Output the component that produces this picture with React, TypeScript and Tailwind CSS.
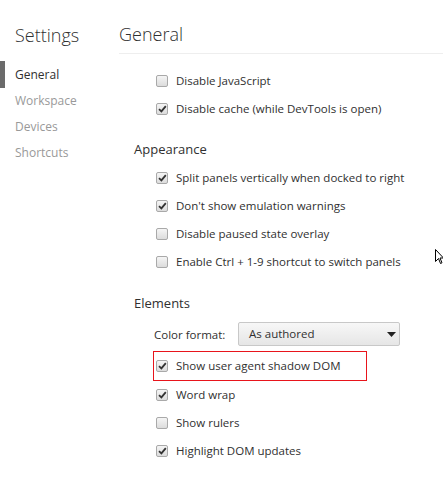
import React from "react";

const font = { fontFamily: '"Open Sans", "Noto Sans", sans-serif' };

function Box({ checked }: { checked: boolean }) {
  return (
    <span className="relative flex h-[12px] w-[12px] shrink-0 items-center justify-center rounded-[2px] border border-[#a9a9a9] bg-gradient-to-b from-[#f5f5f5] to-[#dcdcdc]">
      {checked && (
        <svg width="9" height="8" viewBox="0 0 9 8" className="absolute left-[1px] top-[1px]">
          <path d="M1 4.2 L3.4 6.4 L7.8 1.2" fill="none" stroke="#333" strokeWidth="1.8" />
        </svg>
      )}
    </span>
  );
}

function Row({ label, checked }: { label: string; checked: boolean }) {
  return (
    <div className="ml-[37px] flex h-[28px] items-center">
      <Box checked={checked} />
      <span className="ml-[8px] text-[11.5px] text-[#303030]">{label}</span>
    </div>
  );
}

function Header({ title, top, bottom }: { title: string; top: string; bottom: string }) {
  return (
    <div className={`ml-[15px] ${top} ${bottom} text-[13px] leading-[18px] text-[#303030]`}>{title}</div>
  );
}

export default function App() {
  return (
    <div className="relative flex h-[493px] w-[443px] overflow-hidden bg-white" style={font}>
      <div className="w-[119px] shrink-0">
        <div className="pl-[15px] pt-[22px] text-[18px] font-light leading-[26px] text-[#303030]">Settings</div>
        <div className="mt-[13px] flex flex-col">
          <div className="relative flex h-[27px] items-center pl-[15px] text-[12px] text-[#303030]">
            <span className="absolute left-0 top-0 h-[27px] w-[5px] bg-[#6b6b6b]" />
            General
          </div>
          <div className="flex h-[26px] items-center pl-[15px] text-[12px] text-[#999]">Workspace</div>
          <div className="flex h-[26px] items-center pl-[15px] text-[12px] text-[#999]">Devices</div>
          <div className="flex h-[26px] items-center pl-[15px] text-[12px] text-[#999]">Shortcuts</div>
        </div>
      </div>
      <div className="flex flex-1 flex-col">
        <div className="h-[54px] border-b border-[#eeeeee] pt-[22px] text-[18px] font-light leading-[24px] text-[#303030]">
          General
        </div>
        <div className="mt-[13px]">
          <Row label="Disable JavaScript" checked={false} />
          <Row label="Disable cache (while DevTools is open)" checked={true} />
        </div>
        <Header title="Appearance" top="pt-[17px]" bottom="pb-[6px]" />
        <Row label="Split panels vertically when docked to right" checked={true} />
        <Row label="Don't show emulation warnings" checked={true} />
        <Row label="Disable paused state overlay" checked={false} />
        <Row label="Enable Ctrl + 1-9 shortcut to switch panels" checked={false} />
        <Header title="Elements" top="pt-[18px]" bottom="pb-[8px]" />
        <div className="ml-[35px] flex h-[31px] items-start pt-[2px]">
          <span className="w-[84px] pt-[4px] text-[11.5px] text-[#303030]">Color format:</span>
          <div className="flex h-[24px] w-[162px] items-center justify-between rounded-[2px] border border-[#c8c8c8] bg-gradient-to-b from-[#f7f7f7] to-[#e6e6e6] pl-[10px] pr-[3px]">
            <span className="text-[11.5px] text-[#303030]">As authored</span>
            <svg width="9" height="5" viewBox="0 0 9 5">
              <path d="M0 0 H9 L4.5 5 Z" fill="#222" />
            </svg>
          </div>
        </div>
        <div className="ml-[34px] flex h-[30px] w-[214px] items-center border border-[#e8141b] pl-[2px]">
          <Box checked={true} />
          <span className="ml-[8px] text-[11.5px] text-[#303030]">Show user agent shadow DOM</span>
        </div>
        <Row label="Word wrap" checked={true} />
        <Row label="Show rulers" checked={false} />
        <Row label="Highlight DOM updates" checked={true} />
      </div>
      <svg className="absolute left-[435px] top-[249px]" width="8" height="16" viewBox="0 0 8 16">
        <path d="M0.5 0.5 V12.5 L3.5 9.5 L5.5 14.5 L7 13.8 L5 9 H8.5 Z" fill="#fff" stroke="#000" strokeWidth="1" />
      </svg>
    </div>
  );
}
